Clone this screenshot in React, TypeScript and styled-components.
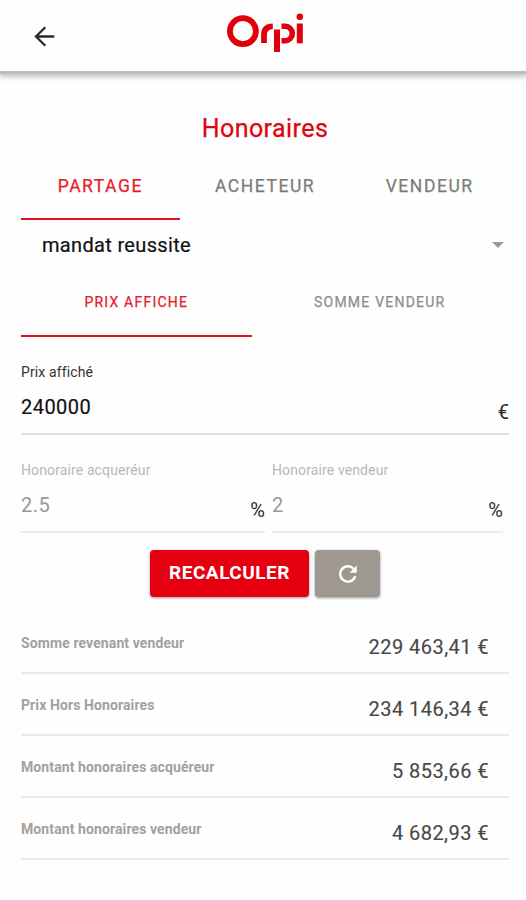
import React from 'react';
import styled, { createGlobalStyle } from 'styled-components';

const GlobalStyle = createGlobalStyle`
  * { box-sizing: border-box; }
  body {
    margin: 0;
    background: #fefefe;
    font-family: Roboto, "Liberation Sans", sans-serif;
    color: #111;
  }
  button { font-family: inherit; border: 0; background: none; padding: 0; }
`;

const Screen = styled.div`
  height: 900px;
  display: flex;
  flex-direction: column;
`;

const Header = styled.header`
  height: 71px;
  flex: none;
  display: grid;
  grid-template-columns: 227px 78px 1fr;
  background: #fefefe;
  box-shadow: 0 3px 1px #bdbdbd, 0 5px 5px 1px rgba(0, 0, 0, 0.22);
`;

const BackButton = styled.button`
  display: flex;
  justify-self: start;
  align-self: start;
  margin: 26px 0 0 34px;
`;

const LogoMark = styled.svg`
  margin-top: 12px;
`;

const Content = styled.main`
  display: flex;
  flex-direction: column;
  padding: 0 17px 0 21px;
`;

const Title = styled.h1`
  margin: 43px 0 0;
  height: 30px;
  line-height: 30px;
  text-align: center;
  font-size: 25px;
  font-weight: 400;
  letter-spacing: 0.45px;
  color: #e0040f;
  -webkit-text-stroke: 0.25px currentColor;
`;

const Tabs = styled.div<{ $count: number; $gap: number; $end?: number }>`
  display: grid;
  grid-template-columns: repeat(${p => p.$count}, 1fr);
  column-gap: ${p => p.$gap}px;
  margin-right: ${p => p.$end ?? 0}px;
`;

const Tab = styled.button<{ $active?: boolean; $small?: boolean }>`
  height: ${p => (p.$small ? 71 : 76)}px;
  padding-top: ${p => (p.$small ? 2 : 9)}px;
  border-bottom: 2px solid ${p => (p.$active ? '#d9141c' : 'transparent')};
  font-size: ${p => (p.$small ? 14 : 17.5)}px;
  font-weight: 400;
  letter-spacing: ${p => (p.$small ? 1.22 : 1.55)}px;
  color: ${p => (p.$active ? '#e5202a' : p.$small ? '#8e8e8e' : '#7c7c7c')};
  white-space: nowrap;
  -webkit-text-stroke: 0.25px currentColor;
`;

const Select = styled.div`
  height: 46px;
  display: flex;
  align-items: center;
  justify-content: space-between;
  padding: 4px 5px 0 21px;
  font-size: 20px;
  letter-spacing: 0.33px;
  -webkit-text-stroke: 0.2px currentColor;
`;

const Field = styled.label<{ $disabled?: boolean }>`
  display: flex;
  flex-direction: column;
  height: 74px;
  border-bottom: 2px solid ${p => (p.$disabled ? '#ececec' : '#e2e2e2')};
  color: ${p => (p.$disabled ? '#b8b8b8' : '#333')};
`;

const FieldLabel = styled.span`
  height: 22px;
  line-height: 22px;
  font-size: 14px;
  letter-spacing: 0.12px;
`;

const FieldLine = styled.span`
  display: flex;
  justify-content: space-between;
  height: 50px;
`;

const FieldValue = styled.span<{ $disabled?: boolean }>`
  line-height: 48px;
  font-size: 20px;
  letter-spacing: 0.45px;
  color: ${p => (p.$disabled ? '#999' : '#111')};
  -webkit-text-stroke: ${p => (p.$disabled ? 0 : 0.2)}px currentColor;
`;

const Unit = styled.span`
  padding-top: 5px;
  line-height: 48px;
  font-size: 20px;
  color: #2c2c2c;
`;

const MainField = styled.div`
  margin-top: 24px;
`;

const FieldPair = styled.div`
  display: grid;
  grid-template-columns: 244px 231px;
  column-gap: 7px;
  margin-top: 24px;
`;

const Actions = styled.div`
  display: flex;
  justify-content: center;
  gap: 6px;
  margin-top: 17px;
`;

const Action = styled.button<{ $tone: 'primary' | 'neutral' }>`
  display: flex;
  align-items: center;
  justify-content: center;
  width: ${p => (p.$tone === 'primary' ? 159 : 65)}px;
  height: 47px;
  padding-bottom: ${p => (p.$tone === 'primary' ? 2 : 0)}px;
  border-radius: 4px;
  background: ${p => (p.$tone === 'primary' ? '#e6000f' : '#9f9890')};
  color: #fff;
  font-size: 19px;
  font-weight: 700;
  letter-spacing: 0.5px;
  box-shadow: 0 1px 3px rgba(0, 0, 0, 0.4);
`;

const Results = styled.dl`
  margin: 15px 0 0;
`;

const ResultRow = styled.div`
  display: flex;
  justify-content: space-between;
  height: 62px;
  padding-right: 20px;
  border-bottom: 2px solid #e9e9e9;
`;

const ResultLabel = styled.dt`
  padding-top: 22px;
  line-height: 18px;
  font-size: 14px;
  font-weight: 700;
  letter-spacing: 0.1px;
  color: #a5a09b;
`;

const ResultValue = styled.dd`
  margin: 0;
  padding-top: 23px;
  line-height: 24px;
  font-size: 20px;
  letter-spacing: 0.45px;
  color: #484848;
  -webkit-text-stroke: 0.15px currentColor;
`;

const Logo = () => (
  <LogoMark width="78" height="42" viewBox="0 0 78 42" fill="none" stroke="#e0000b" aria-label="Orpi">
    <circle cx="15.9" cy="19.2" r="13" strokeWidth="5.8" />
    <path d="M37 31V23Q37 14.3 45.8 14.3" strokeWidth="5.8" />
    <path d="M50 40V17.5" strokeWidth="6" />
    <path d="M54.5 14.3h3.7a7.1 7.2 0 0 1 0 14.4H54.5" strokeWidth="5.6" />
    <path d="M72.8 31.3V11.5" strokeWidth="6" />
    <circle cx="72.8" cy="4.8" r="3.3" fill="#e0000b" stroke="none" />
  </LogoMark>
);

const fees = [
  { label: 'Honoraire acqueréur', value: '2.5' },
  { label: 'Honoraire vendeur', value: '2' },
];

const results = [
  { label: 'Somme revenant vendeur', value: '229 463,41 €' },
  { label: 'Prix Hors Honoraires', value: '234 146,34 €' },
  { label: 'Montant honoraires acquéreur', value: '5 853,66 €' },
  { label: 'Montant honoraires vendeur', value: '4 682,93 €' },
];

export default function App() {
  return (
    <>
      <GlobalStyle />
      <Screen>
        <Header>
          <BackButton aria-label="Retour">
            <svg width="21" height="21" viewBox="0 0 21 21" fill="none" stroke="#2b2b2b" strokeWidth="2.3">
              <path d="M20.3 10.5H2M11.3 1.2L2 10.5l9.3 9.3" />
            </svg>
          </BackButton>
          <Logo />
        </Header>
        <Content>
          <Title>Honoraires</Title>
          <Tabs $count={3} $gap={6}>
            <Tab $active>PARTAGE</Tab>
            <Tab>ACHETEUR</Tab>
            <Tab>VENDEUR</Tab>
          </Tabs>
          <Select>
            mandat reussite
            <svg width="12" height="6" viewBox="0 0 12 6">
              <path d="M0 0h12L6 6z" fill="#999" />
            </svg>
          </Select>
          <Tabs $count={2} $gap={13} $end={14}>
            <Tab $small $active>PRIX AFFICHE</Tab>
            <Tab $small>SOMME VENDEUR</Tab>
          </Tabs>
          <MainField>
            <Field>
              <FieldLabel>Prix affiché</FieldLabel>
              <FieldLine>
                <FieldValue>240000</FieldValue>
                <Unit>€</Unit>
              </FieldLine>
            </Field>
          </MainField>
          <FieldPair>
            {fees.map(fee => (
              <Field key={fee.label} $disabled>
                <FieldLabel>{fee.label}</FieldLabel>
                <FieldLine>
                  <FieldValue $disabled>{fee.value}</FieldValue>
                  <Unit>%</Unit>
                </FieldLine>
              </Field>
            ))}
          </FieldPair>
          <Actions>
            <Action $tone="primary">RECALCULER</Action>
            <Action $tone="neutral" aria-label="Réinitialiser">
              <svg width="18" height="18" viewBox="0 0 18 18" fill="none" stroke="#fff" strokeWidth="2.4">
                <path d="M16.3 11.2A7.7 7.7 0 1 1 14.6 3.7" />
                <path d="M17.8 .6v7.2h-7.2z" fill="#fff" stroke="none" />
              </svg>
            </Action>
          </Actions>
          <Results>
            {results.map(row => (
              <ResultRow key={row.label}>
                <ResultLabel>{row.label}</ResultLabel>
                <ResultValue>{row.value}</ResultValue>
              </ResultRow>
            ))}
          </Results>
        </Content>
      </Screen>
    </>
  );
}
